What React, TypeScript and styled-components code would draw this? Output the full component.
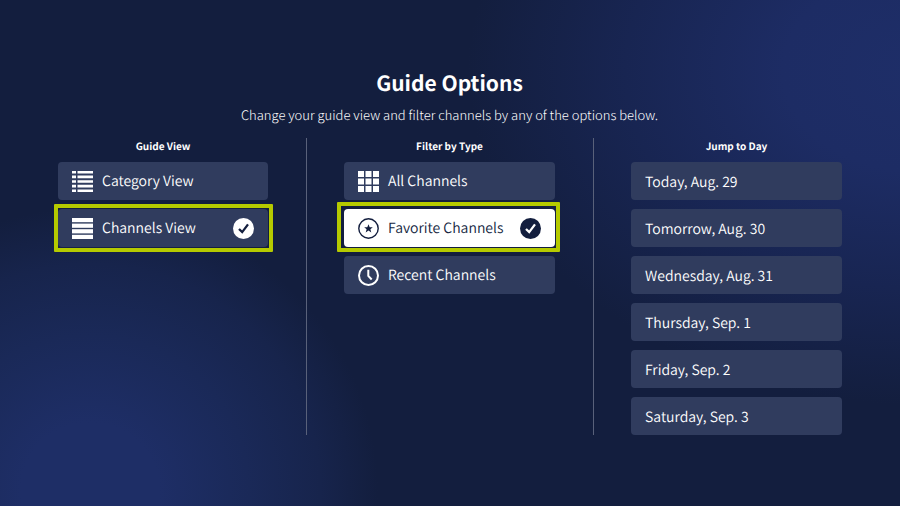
import React, { useState } from "react";
import styled, { createGlobalStyle, css } from "styled-components";

const navy = "#131e3e";

const GlobalStyle = createGlobalStyle`
  *, *::before, *::after { box-sizing: border-box; }
  body {
    margin: 0;
    background: ${navy};
    color: #fff;
    font-family: "Noto Sans CJK JP", "Noto Sans", sans-serif;
    font-weight: 350;
    text-rendering: geometricPrecision;
  }
`;

const Page = styled.main`
  min-height: 100vh;
  padding: 67px 20px 20px 19px;
  background:
    radial-gradient(ellipse 50% 66% at 102% 14%, #1e2e68 0%, #1d2c64 30%, #182552 65%, rgba(20, 31, 64, 0) 100%),
    radial-gradient(ellipse 32% 56% at 10% 97%, #1e2e66 0%, #1e2e66 24%, #1a2958 55%, #17244c 80%, rgba(20, 31, 64, 0) 100%),
    ${navy};
`;

const Header = styled.header`
  text-align: center;
`;

const Title = styled.h1`
  margin: 0;
  font-size: 21px;
  line-height: 32px;
  font-weight: 700;
`;

const Subtitle = styled.p`
  margin: 5px 0 12px;
  font-size: 13px;
  line-height: 22px;
  font-weight: 300;
  color: #fff;
`;

const Columns = styled.div`
  display: grid;
  grid-template-columns: repeat(3, 1fr);
`;

const Column = styled.section`
  padding: 0 38px 0 39px;

  & + & {
    border-left: 1px solid #59617a;
    padding-left: 37px;
  }
`;

const ColumnTitle = styled.h2`
  margin: 0 0 8px;
  text-align: center;
  font-size: 10px;
  line-height: 16px;
  font-weight: 700;
`;

const OptionList = styled.div`
  display: flex;
  flex-direction: column;
  gap: 9px;
`;

type Ring = "snug" | "wide";

const ringInset: Record<Ring, string> = {
  snug: "-5px -5px -5px -4px",
  wide: "-7px -5px -5px -7px",
};

const Option = styled.button<{ $focused?: boolean; $ring?: Ring; $textOnly?: boolean }>`
  position: relative;
  display: flex;
  align-items: center;
  gap: 9px;
  width: 100%;
  height: 38px;
  padding: ${(p) => (p.$textOnly ? "2px 14px 0" : "0 14px")};
  border: 0;
  border-radius: 4px;
  background: ${(p) => (p.$focused ? "#fff" : "#303c5e")};
  color: ${(p) => (p.$focused ? navy : "#fff")};
  font-family: inherit;
  font-weight: inherit;
  font-size: 14px;
  line-height: 22px;
  text-rendering: inherit;
  text-align: left;
  cursor: pointer;

  ${(p) =>
    p.$ring &&
    css`
      &::after {
        content: "";
        position: absolute;
        inset: ${ringInset[p.$ring]};
        border: 4px solid #b5ca00;
        border-radius: 1px;
        pointer-events: none;
      }
    `}
`;

const Label = styled.span`
  flex: 1;
  white-space: nowrap;
`;

const Icon = styled.svg`
  display: block;
  flex: none;
  width: 21px;
  height: 21px;
`;

const CategoryIcon = () => (
  <Icon viewBox="0 0 21 21" fill="currentColor" aria-hidden="true">
    {[0, 4.6, 9.2, 13.8, 18.4].map((y) => (
      <path key={y} d={`M0 ${y}h4v2.6h-4zM5.5 ${y}H21v2.6H5.5z`} />
    ))}
  </Icon>
);

const RowsIcon = () => (
  <Icon viewBox="0 0 21 21" fill="currentColor" aria-hidden="true">
    {[0, 5.6, 11.2, 16.8].map((y) => (
      <rect key={y} y={y} width="21" height="4.2" />
    ))}
  </Icon>
);

const GridIcon = () => (
  <Icon viewBox="0 0 21 21" fill="currentColor" aria-hidden="true">
    {[0, 7.5, 15].map((y) =>
      [0, 7.5, 15].map((x) => <rect key={`${x}-${y}`} x={x} y={y} width="6" height="6" />)
    )}
  </Icon>
);

const StarIcon = () => (
  <Icon viewBox="0 0 21 21" aria-hidden="true">
    <circle cx="10.5" cy="10.5" r="9.7" fill="none" stroke="currentColor" strokeWidth="1.4" />
    <path
      fill="currentColor"
      d="M10.5 6.2l1.2 3h3.1l-2.4 2 .9 3.2-2.8-1.8-2.8 1.8.9-3.2-2.4-2h3.1z"
    />
  </Icon>
);

const ClockIcon = () => (
  <Icon viewBox="0 0 21 21" fill="none" stroke="currentColor" strokeWidth="2" aria-hidden="true">
    <circle cx="10.5" cy="10.5" r="9.5" />
    <path d="M10.3 4.8v6.1l3.4 3.6" />
  </Icon>
);

const CheckIcon = ({ mark }: { mark: string }) => (
  <Icon viewBox="0 0 21 21" aria-hidden="true">
    <circle cx="10.5" cy="10.5" r="10.5" fill="currentColor" />
    <path d="M6 11l3.2 3.1L15 6.4" fill="none" stroke={mark} strokeWidth="2.3" />
  </Icon>
);

const views = [
  { name: "Category View", icon: <CategoryIcon /> },
  { name: "Channels View", icon: <RowsIcon /> },
];

const filters = [
  { name: "All Channels", icon: <GridIcon /> },
  { name: "Favorite Channels", icon: <StarIcon /> },
  { name: "Recent Channels", icon: <ClockIcon /> },
];

const days = [
  "Today, Aug. 29",
  "Tomorrow, Aug. 30",
  "Wednesday, Aug. 31",
  "Thursday, Sep. 1",
  "Friday, Sep. 2",
  "Saturday, Sep. 3",
];

export default function App() {
  const [view, setView] = useState("Channels View");
  const [filter, setFilter] = useState("Favorite Channels");

  return (
    <>
      <GlobalStyle />
      <Page>
        <Header>
          <Title>Guide Options</Title>
          <Subtitle>Change your guide view and filter channels by any of the options below.</Subtitle>
        </Header>
        <Columns>
          <Column aria-labelledby="guide-view">
            <ColumnTitle id="guide-view">Guide View</ColumnTitle>
            <OptionList>
              {views.map(({ name, icon }) => (
                <Option
                  key={name}
                  type="button"
                  aria-pressed={view === name}
                  $ring={view === name ? "snug" : undefined}
                  onClick={() => setView(name)}
                >
                  {icon}
                  <Label>{name}</Label>
                  {view === name && <CheckIcon mark={navy} />}
                </Option>
              ))}
            </OptionList>
          </Column>
          <Column aria-labelledby="filter-type">
            <ColumnTitle id="filter-type">Filter by Type</ColumnTitle>
            <OptionList>
              {filters.map(({ name, icon }) => (
                <Option
                  key={name}
                  type="button"
                  aria-pressed={filter === name}
                  $focused={filter === name}
                  $ring={filter === name ? "wide" : undefined}
                  onClick={() => setFilter(name)}
                >
                  {icon}
                  <Label>{name}</Label>
                  {filter === name && <CheckIcon mark="#fff" />}
                </Option>
              ))}
            </OptionList>
          </Column>
          <Column aria-labelledby="jump-day">
            <ColumnTitle id="jump-day">Jump to Day</ColumnTitle>
            <OptionList>
              {days.map((day) => (
                <Option key={day} type="button" $textOnly>
                  <Label>{day}</Label>
                </Option>
              ))}
            </OptionList>
          </Column>
        </Columns>
      </Page>
    </>
  );
}
